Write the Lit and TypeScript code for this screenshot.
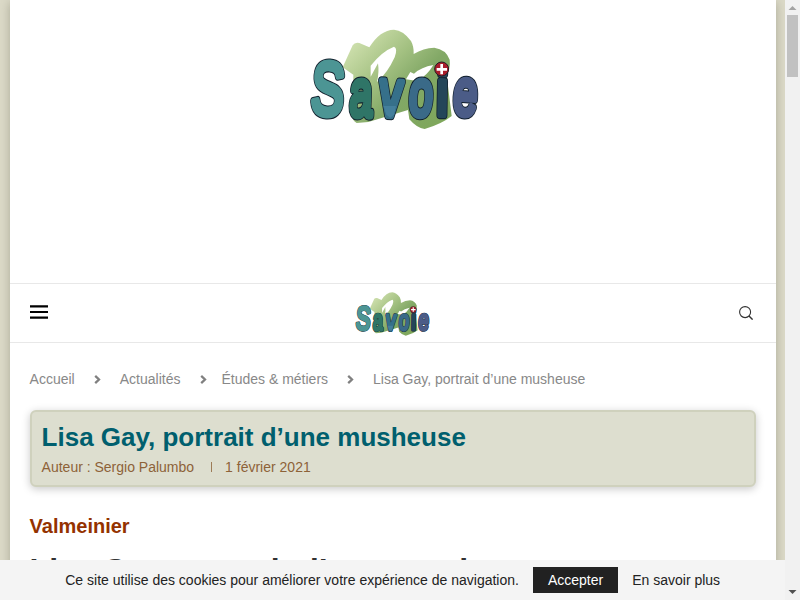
import { LitElement, html, svg, css } from "lit";
import { customElement } from "lit/decorators.js";

interface Letter { ch: string; x: number; y: number; size: number; sx: number; fill: string; rot: number; }

const LETTERS: Letter[] = [
  { ch: "S", x: 79, y: 283, size: 222, sx: 0.66, fill: "#4c9594", rot: 4 },
  { ch: "a", x: 181, y: 287, size: 194, sx: 0.62, fill: "#2f7567", rot: 2 },
  { ch: "v", x: 269, y: 287, size: 196, sx: 0.68, fill: "#36708a", rot: 4 },
  { ch: "o", x: 359, y: 286, size: 192, sx: 0.65, fill: "#3a6a88", rot: 4 },
  { ch: "i", x: 426, y: 285, size: 192, sx: 0.8, fill: "#244659", rot: 1 },
  { ch: "e", x: 493, y: 284, size: 192, sx: 0.66, fill: "#4b5c87", rot: 4 },
];

@customElement("savoie-logo")
export class SavoieLogo extends LitElement {
  static styles = css`
    :host { display: block; }
    svg { display: block; width: 100%; height: 100%; }
    text { font-family: "Liberation Sans", Arial, sans-serif; text-anchor: middle; stroke-linejoin: round; vector-effect: non-scaling-stroke; }
    .edge { fill: #101e2b; stroke: #101e2b; stroke-width: var(--edge, 7.4px); }
    .body { stroke-width: var(--body, 5.7px); }
  `;
  render() {
    const t = (l: Letter) => `translate(${l.x} ${l.y}) rotate(${l.rot}) scale(${l.sx} 1)`;
    return html`<svg viewBox="0 0 570 360" role="img" aria-label="Savoie">
      <defs>
        <linearGradient id="hill" gradientUnits="userSpaceOnUse" x1="150" y1="70" x2="400" y2="320">
          <stop offset="0" stop-color="#cfe0ae" />
          <stop offset=".35" stop-color="#a5c283" />
          <stop offset=".62" stop-color="#82a866" />
          <stop offset="1" stop-color="#7fa75c" />
        </linearGradient>
      </defs>
      <path fill="url(#hill)" fill-rule="evenodd" d="M128 142 L158 76 Q164 66 178 69 L208 82 Q240 30 282 29 Q310 31 333 63 Q342 80 341 102 Q370 84 403 83 Q438 88 449 119 Q452 142 440 166 L455 288 Q425 312 374 327 Q350 324 328 298 L324 270 L205 306 L170 309 Q156 302 158 285 L160 164 Z
        M282 80 Q246 94 212 137 L212 170 L234 130 Q238 156 231 186 Q262 160 284 112 Q294 84 282 80 Z
        M400 135 Q364 141 342 161 L331 156 L318 178 L352 183 Q382 166 400 135 Z" />
      ${LETTERS.map((l) => svg`<text class="edge" aria-hidden="true" font-size=${l.size} transform=${t(l)}>${l.ch}</text>
        <text class="body" font-size=${l.size} fill=${l.fill} stroke=${l.fill} transform=${t(l)}>${l.ch}</text>`)}
      <path d="M250 258 L288 258 L282 284 L271 293 L259 284 Z" fill="#4f89a8" opacity=".6" />
      <circle cx="425" cy="147" r="21" fill="#a81c2a" stroke="#241c24" stroke-width="3" />
      <path d="M425 132v31M410 148h31" stroke="#fff" stroke-width="8" />
    </svg>`;
  }
}

@customElement("app-root")
export class AppRoot extends LitElement {
  static styles = css`
    * { box-sizing: border-box; }
    :host { display: grid; grid-template-columns: 785px 15px; width: 800px; height: 600px; overflow: hidden; font: 14px/20px "Liberation Sans", Arial, sans-serif; color: #313131; }
    .window { display: flex; flex-direction: column; height: 600px; }
    .page { height: 560px; overflow: hidden; background: #dcdac8; padding: 0 9px 0 10px; }
    .sheet { height: 700px; background: #fff; box-shadow: 0 2px 10px rgba(80, 80, 60, .36); }
    .banner { height: 283px; padding: 20px 0 0 290px; }
    .big { width: 190px; height: 120px; }
    .nav { height: 60px; border: solid #e8e8e8; border-width: 1px 0; display: flex; align-items: center; justify-content: space-between; padding: 0 23px 0 20px; }
    .burger { width: 18px; height: 14px; display: block; margin-top: -2px; }
    .small { width: 83.5px; height: 52.7px; margin: 2px 2px 0 0; --edge: 3.2px; --body: 2.6px; }
    .search { width: 14px; height: 14px; display: block; }
    .content { padding: 26px 20px 0 19.6px; }
    .crumbs { display: flex; align-items: center; height: 20px; color: #888; white-space: nowrap; }
    .crumbs svg { width: 7px; height: 9px; flex: none; }
    .g1 { margin: 0 19px; } .g2 { margin: 0 14px 0 20px; } .g3 { margin: 0 19px; }
    .card { margin: 21px 0 0 .4px; height: 77px; border: 2px solid #cfd1bd; border-radius: 6px; background: #dddecf; box-shadow: 0 2px 8px rgba(0, 0, 0, .22); padding: 9px 9.6px; }
    h1 { margin: 0; font-size: 26px; line-height: 32px; color: #005f6e; }
    .meta { display: flex; align-items: center; color: #8d6238; margin-top: 4px; line-height: 20px; }
    .bar { width: 1px; height: 10px; background: #8d6238; opacity: .8; margin: 0 13px 0 17px; }
    h2 { margin: 26px 0 0; font-size: 20px; line-height: 26px; color: #943200; }
    h3 { margin: 13px 0 0; font-size: 32px; line-height: 36px; color: #313131; white-space: nowrap; }
    .cookies { width: 785px; height: 40px; background: #f4f4f4; display: flex; align-items: center; justify-content: center; color: #222; padding-left: .4px; }
    .accept { height: 26px; line-height: 26px; padding: 0 15px; background: #212121; color: #fff; margin: 0 14px; }
    .scroll { background: #f1f1f1; display: flex; flex-direction: column; align-items: center; }
    .up, .down { width: 15px; height: 15px; flex: none; display: block; }
    .thumb { width: 11px; height: 62px; background: #c1c1c1; }
    .down { margin-top: auto; }
  `;
  chevron(c: string) {
    return html`<svg class=${c} viewBox="0 0 7 9"><path d="M1.2 .9 5 4.5 1.2 8.1" fill="none" stroke="#808080" stroke-width="2.3" /></svg>`;
  }
  render() {
    return html`
      <div class="window">
        <div class="page">
          <div class="sheet">
            <div class="banner"><savoie-logo class="big"></savoie-logo></div>
            <div class="nav">
              <svg class="burger" viewBox="0 0 18 14"><path d="M0 1.3h18M0 7h18M0 12.7h18" stroke="#000" stroke-width="2.2" /></svg>
              <savoie-logo class="small"></savoie-logo>
              <svg class="search" viewBox="0 0 14 14"><circle cx="6.1" cy="6.1" r="5.5" fill="none" stroke="#313131" stroke-width="1.1" /><path d="M10 10 13.6 13.6" stroke="#313131" stroke-width="1.4" /></svg>
            </div>
            <div class="content">
              <div class="crumbs"><span>Accueil</span>${this.chevron("g1")}<span>Actualités</span>${this.chevron("g2")}<span>Études &amp; métiers</span>${this.chevron("g3")}<span>Lisa Gay, portrait d’une musheuse</span></div>
              <div class="card">
                <h1>Lisa Gay, portrait d’une musheuse</h1>
                <div class="meta"><span>Auteur : Sergio Palumbo</span><i class="bar"></i><span>1 février 2021</span></div>
              </div>
              <h2>Valmeinier</h2>
              <h3>Lisa Gay, portrait d’une musheuse</h3>
            </div>
          </div>
        </div>
        <div class="cookies"><span>Ce site utilise des cookies pour améliorer votre expérience de navigation.</span><span class="accept">Accepter</span><span>En savoir plus</span></div>
      </div>
      <div class="scroll">
        <svg class="up" viewBox="0 0 15 15"><path d="M7.5 6 11.5 10h-8z" fill="#a3a3a3" /></svg>
        <div class="thumb"></div>
        <svg class="down" viewBox="0 0 15 15"><path d="M7.5 9 11.5 5h-8z" fill="#505050" /></svg>
      </div>`;
  }
}
